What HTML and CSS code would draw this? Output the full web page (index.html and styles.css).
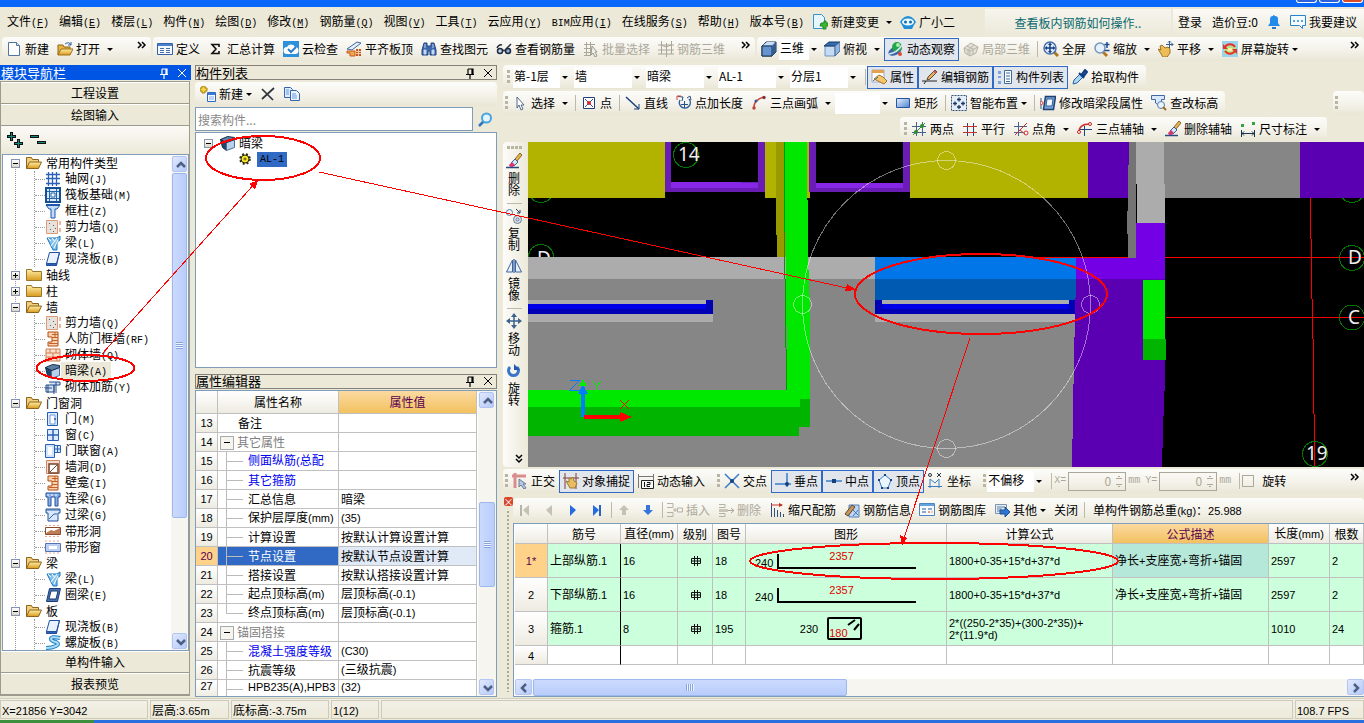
FILE: index.html
```html
<!DOCTYPE html>
<html lang="zh-CN">
<head>
<meta charset="utf-8">
<title>钢筋算量</title>
<link rel="stylesheet" href="styles.css">
</head>
<body>
<svg class="defs" aria-hidden="true">
<defs>
<linearGradient id="gold" x1="0" y1="0" x2="0" y2="1"><stop offset="0" stop-color="#fff0a8"/><stop offset="1" stop-color="#d99a1c"/></linearGradient>
<linearGradient id="sky" x1="0" y1="0" x2="1" y2="1"><stop offset="0" stop-color="#e6f1ff"/><stop offset="1" stop-color="#4d83cf"/></linearGradient>
</defs>
<symbol id="new" viewBox="0 0 16 16"><path d="M2.500 1.500h8l3 3v10h-11z" fill="#fff" stroke="#52749f"/><path d="M10.500 1.500v3h3" fill="#d6e4f5" stroke="#52749f"/></symbol>
<symbol id="open" viewBox="0 0 16 16"><path d="M1 14V4h5l1 2h6v3" fill="#e8b545" stroke="#8d6417"/><path d="M1 14L4 8h12l-3 6z" fill="url(#gold)" stroke="#a06f16"/><path d="M8 3q4-3 6 1M14 1v3h-3" fill="none" stroke="#2d5faa"/></symbol>
<symbol id="folder" viewBox="0 0 16 16"><path d="M.5 13.500v-11h5l1 2h9v9z" fill="url(#gold)" stroke="#98762c"/></symbol>
<symbol id="ofolder" viewBox="0 0 16 16"><path d="M.5 13.500v-11h5l1 2h6v3" fill="#f0cf80" stroke="#8d6417"/><path d="M.5 13.500l3-6.500h12l-3 6.500z" fill="url(#gold)" stroke="#8d6417"/></symbol>
<symbol id="define" viewBox="0 0 16 16"><path d="M.5 2.500h15v11H.5z" fill="#f5f9ff" stroke="#3561a9"/><path d="M1 3h14v2H1z" fill="#4a80d0"/><path d="M3 7.500h4M3 9.500h4M3 11.500h4M9 7.500h4M9 9.500h4M9 11.500h4" stroke="#4a70a8"/></symbol>
<symbol id="sigma" viewBox="0 0 16 16"><path d="M11 6V3.500H4L8 8l-4 4.500h7V10" fill="none" stroke="#111" stroke-width="1.600"/></symbol>
<symbol id="cloud" viewBox="0 0 16 16"><path d="M0 0h16v16H0z" fill="#2c91da"/><path d="M4 13a3.500 3.500 0 0 1 0-7 4.500 4.500 0 0 1 8 0 3.500 3.500 0 0 1 0 7z" fill="#fff"/><path d="M5 8l3 3 5-5" fill="none" stroke="#2c7dca" stroke-width="2"/></symbol>
<symbol id="align" viewBox="0 0 16 16"><path d="M1 8l10-7 4 1-9 7z" fill="#e3eefc" stroke="#44699e"/><path d="M1 10h8v5H4v-3H1z" fill="#f5a848" stroke="#c3591a"/><path d="M10 8h5v7h-5z" fill="#c2561d"/><path d="M10 10.500h5M10 12.500h5M12.500 8v7" stroke="#f7caa3"/></symbol>
<symbol id="binoc" viewBox="0 0 16 16"><path d="M3 2h3v3h4V2h3l2 7v5H9v-4H7v4H1V9z" fill="#3c68ae" stroke="#244781"/><path d="M3 9h2v4H3zM11 9h2v4h-2zM4 3v4M12 3v4" fill="#cfe0f8" stroke="#bed3f3"/></symbol>
<symbol id="glasses" viewBox="0 0 16 16"><path d="M1 7q2-4 5-3M10 8l5-5M6.500 10q1.500-1.500 3 0" fill="none" stroke="#263042" stroke-width="1.500"/><circle cx="4" cy="10" r="2.500" fill="#c6d8ef" stroke="#1f2a3b" stroke-width="1.500"/><circle cx="12" cy="10" r="2.500" fill="#89acdd" stroke="#1f2a3b" stroke-width="1.500"/></symbol>
<symbol id="batch" viewBox="0 0 16 16"><path d="M1 3.500h11M1 7.500h8M1 11.500h7M3.500 1v13M7.500 1v13M1 14.500h7" stroke="#aaa798" fill="none"/><path d="M9 5l5 6h-2l2 4-2 1-2-4-2 2z" fill="#efeee7" stroke="#9e9b8b"/></symbol>
<symbol id="cage" viewBox="0 0 16 16"><path d="M3.500 0v13M8.500 2v14M13.500 0v13M0 4h16M0 9h16M0 13h16M3 4l5 2 5-2" stroke="#aaa798" fill="none"/></symbol>
<symbol id="cube" viewBox="0 0 16 16"><path d="M1 5l4-4h10v10l-4 4H1z" fill="#8bb0de" stroke="#1a3350"/><path d="M1 5h10v10H1z" fill="#6593cf" stroke="#1a3350"/><path d="M11 5l4-4v10l-4 4z" fill="#355c90"/><path d="M2 4l4-3h8l-3 3z" fill="#c9def7"/></symbol>
<symbol id="topv" viewBox="0 0 16 16"><path d="M1 5h10v10H1z" fill="#c5daf3" stroke="#7394be"/><path d="M0 5l5-4h11l-5 4z" fill="#326db0" stroke="#183b66"/><path d="M11 5l5-4v9l-5 5z" fill="#91b5df" stroke="#476b96"/></symbol>
<symbol id="orbit" viewBox="0 0 16 16"><ellipse cx="7" cy="10" rx="7" ry="4" fill="#3767a5" transform="rotate(-25 7 10)"/><circle cx="9" cy="6" r="5" fill="#26a64b"/><circle cx="10" cy="4" r="2" fill="#a5efa8"/><path d="M1 13q8-1 13-9" fill="none" stroke="#d8e6f4" stroke-width="1.500"/><circle cx="12" cy="13" r="2" fill="#dc4b34"/></symbol>
<symbol id="part" viewBox="0 0 16 16"><path d="M1 7l7-5 7 4-2 6-6 3-5-3z" fill="#e3e1d8" stroke="#b7b4a6"/><path d="M1 7l6 3 8-4M7 10v5M4 5l6 3v6M11 4l-6 5v5" fill="none" stroke="#b7b4a6"/></symbol>
<symbol id="full" viewBox="0 0 16 16"><path d="M11 11l4 4" stroke="#ae761e" stroke-width="3"/><circle cx="7" cy="7" r="6" fill="#dceafb" stroke="#4a71aa" stroke-width="1.500"/><path d="M3 7h8M7 3v8" stroke="#153f83" stroke-width="1.500"/><path d="M7 1.500l2 2.500H5zM7 12.500l2-2.500H5zM1.500 7L4 5v4zM12.500 7L10 5v4z" fill="#153f83"/></symbol>
<symbol id="zoom" viewBox="0 0 16 16"><path d="M9 11l4 4" stroke="#b17a22" stroke-width="3"/><circle cx="6" cy="7" r="5" fill="#e7f1fd" stroke="#7596bb" stroke-width="1.500"/><path d="M13 1v6M10.500 3.500h5M10.500 9.500h5" stroke="#184b91" stroke-width="1.500"/></symbol>
<symbol id="hand" viewBox="0 0 16 16"><path d="M0 8l3 1-1-4 2-1 3 3 3-1 2 2v4l-3 4H5z" fill="#edbd58" stroke="#9e7224"/><path d="M11.500 0v7M8 3.500h7M10 1.500L11.500 0 13 1.500M13.500 2L15 3.500 13.500 5" stroke="#315b92" fill="none"/></symbol>
<symbol id="scrrot" viewBox="0 0 16 16"><path d="M0 0h16v16H0z" fill="#9bd3e8"/><path d="M2 5h12v8H2z" fill="#b5e28c"/><path d="M3 6a6 6 0 0 1 10 0M13 10a6 6 0 0 1-10 0" fill="none" stroke="#e82f28" stroke-width="2"/><path d="M1 3v5h5zM15 13V8h-5z" fill="#e82f28"/><path d="M6 7h4v3H6z" fill="#fff2a0"/></symbol>
<symbol id="change" viewBox="0 0 16 16"><path d="M1.500.5h8l3 3v11h-11z" fill="#e7f5ff" stroke="#3893c9"/><path d="M9 9h3V7h2v2h2v3h-2v3h-3v-3H8z" fill="#3db52c" stroke="#1f8a26"/></symbol>
<symbol id="robot" viewBox="0 0 16 16"><path d="M2 5q6-6 12 0l2 3-2 3-2 4H4l-2-4-2-3z" fill="#238ed6"/><ellipse cx="8" cy="8" rx="6" ry="3.500" fill="#e9faff"/><circle cx="5.500" cy="8" r="1.500" fill="#126bb1"/><circle cx="10.500" cy="8" r="1.500" fill="#126bb1"/></symbol>
<symbol id="bell" viewBox="0 0 16 16"><path d="M2 12l2-3V5q0-3 3-3 0-2 2 0 3 0 3 3v4l2 3z" fill="#238bea"/><path d="M6 13h4v2H6z" fill="#2a79c8"/></symbol>
<symbol id="chat" viewBox="0 0 16 16"><path d="M.5 1.500h15v10h-3v3l-3-3h-9z" fill="#f4fbff" stroke="#2a82ca"/><path d="M3 7h2M7 7h2M11 7h2" stroke="#2a82ca" stroke-width="1.500"/></symbol>
<symbol id="attr" viewBox="0 0 16 16"><path d="M1 1h12v12H1z" fill="#fff" stroke="#a2adbb"/><path d="M1 1h12v3H1z" fill="#e5a14f"/><path d="M3 10l5-4 4 2 4 4-3 3z" fill="#f4c66b" stroke="#a8722c"/><path d="M2 12l5-4" stroke="#4b6385"/></symbol>
<symbol id="pencil" viewBox="0 0 16 16"><path d="M0 12h15M4 12L2 15" stroke="#222" fill="none"/><path d="M5 11l1-3 7-7 2 2-7 7z" fill="#e8b163" stroke="#5b4b37"/><path d="M12 2l2 2" stroke="#d15858" stroke-width="2"/></symbol>
<symbol id="list" viewBox="0 0 16 16"><path d="M1 2h3v3H1zM1 7h3v2H1zM1 12h3v3H1z" fill="#78a5e1"/><path d="M7.500 1.500h7v13h-7z" fill="#fff" stroke="#3e699f"/><path d="M9 4h4M9 7h4M9 10h4M9 12.500h4" stroke="#3e699f"/></symbol>
<symbol id="drop" viewBox="0 0 16 16"><path d="M1 15l1-4 6-6 3 3-6 6z" fill="#a9d6f5" stroke="#2d63a5"/><path d="M7 4l5 5M10 5l3-4 2 2-3 4z" stroke="#123e82" stroke-width="2" fill="#25599c"/></symbol>
<symbol id="cursor" viewBox="0 0 16 16"><path d="M5 2v11l2-3 2 5 2-1-2-4h3z" fill="#fff" stroke="#536a8d"/></symbol>
<symbol id="pt" viewBox="0 0 16 16"><path d="M2.500 2.500h11v11h-11z" fill="#fff" stroke="#253d7b"/><path d="M4 4l8 8M12 4l-8 8" stroke="#2d4d9c"/><circle cx="8" cy="8" r="2" fill="#d82828"/></symbol>
<symbol id="line" viewBox="0 0 16 16"><path d="M1 2l13 12" stroke="#1b407b" stroke-width="1.500"/><path d="M14 9v5H9" stroke="#1b407b" fill="none"/></symbol>
<symbol id="ptlen" viewBox="0 0 16 16"><path d="M4 5a5.500 5.500 0 1 0 9-1" fill="none" stroke="#3160a4" stroke-width="1.500"/><path d="M5 9.500h7M8.500 6v7M2 1.500l5 .5-1 4M11 3l3-2 1 4" stroke="#294e83" fill="none"/><path d="M1 5V1h4" stroke="#d34132" fill="none"/></symbol>
<symbol id="arc" viewBox="0 0 16 16"><path d="M3 14Q2 5 13 2" fill="none" stroke="#ca4436" stroke-width="1.500"/><circle cx="3" cy="13" r="1.700" fill="#b64439"/><circle cx="13" cy="2.500" r="1.700" fill="#7c353c"/><circle cx="5" cy="6" r="1.500" fill="#315a9e"/></symbol>
<symbol id="rect" viewBox="0 0 16 16"><path d="M1.500 3.500h13v9h-13z" fill="url(#sky)" stroke="#2656a2"/></symbol>
<symbol id="smart" viewBox="0 0 16 16"><path d="M.5.5h15v15H.5z" fill="#e5edf8" stroke="#375276" stroke-dasharray="2 1"/><path d="M6 4.500h4M8 2.500v4M2 8.500h4M4 6.500v4M10 8.500h4M12 6.500v4M6 12h4M8 10v4" stroke="#183961" stroke-width="1.300"/></symbol>
<symbol id="seg" viewBox="0 0 16 16"><path d="M5.500 1.500h10l-2 13h-10z" fill="#76a0d9" stroke="#1e416f" stroke-width="1.500"/><path d="M7 4h6l-1 7H6z" fill="#f3f8ff" stroke="#32639b"/><path d="M1 3v11" stroke="#315688"/><circle cx="1.500" cy="8" r="1.500" fill="#fff" stroke="#d33"/></symbol>
<symbol id="elev" viewBox="0 0 16 16"><path d="M.5.500h13v4h-3v3l-3 2.500L4.500 8V4.500h-4z" fill="#d8e8ff" stroke="#4168a5"/><circle cx="10" cy="10" r="3.500" fill="#eaf4ff" stroke="#587aae"/><path d="M12 12l3 3" stroke="#9f6b25" stroke-width="2"/></symbol>
<symbol id="twopt" viewBox="0 0 16 16"><path d="M1 5.500h14M1 11.500h14M5.500 1v14M11.500 1v14" stroke="#46618d"/><path d="M2 14L14 2" stroke="#39873a"/><circle cx="11" cy="5" r="2" fill="#288b36"/><circle cx="5" cy="11" r="2" fill="#288b36"/></symbol>
<symbol id="parl" viewBox="0 0 16 16"><path d="M5.500 2v13M11.500 2v13" stroke="#27477e"/><path d="M1 5.500h14M1 11.500h14" stroke="#c6302d"/></symbol>
<symbol id="ptang" viewBox="0 0 16 16"><path d="M1 5.500h13M1 11.500h9M5.500 1v14" stroke="#46618d"/><path d="M2 14L14 2" stroke="#cc2f2c"/><circle cx="13" cy="12" r="2" fill="#fff" stroke="#cc2f2c"/><path d="M7 9l5 4" stroke="#cc2f2c"/></symbol>
<symbol id="arcax" viewBox="0 0 16 16"><path d="M2 11Q2 3 13 3" fill="none" stroke="#cc2f2c" stroke-width="1.500"/><path d="M3 8.500h12M7.500 5v10" stroke="#1c457e"/><circle cx="2" cy="11" r="1.500" fill="#fff" stroke="#c22"/><circle cx="13" cy="3" r="1.500" fill="#fff" stroke="#c22"/></symbol>
<symbol id="brush" viewBox="0 0 16 16"><path d="M0 14.500h13" stroke="#244d83" stroke-width="1.500"/><path d="M9 6l5-6 2 2-5 6z" fill="#e6b34e" stroke="#8c6525"/><path d="M5 10l4-4 3 3-4 4z" fill="#d6e6fa" stroke="#3b6191"/><path d="M3 12l3-3 3 3-2 2H4z" fill="#cf3b72"/></symbol>
<symbol id="dim" viewBox="0 0 16 16"><path d="M1.500 9v7M14.500 9v7M2 12.500h12M4 10.500l-2 2 2 2M12 10.500l2 2-2 2" stroke="#1c3350" fill="none"/><path d="M1 3h3v3H1zM12 1h3v3h-3z" fill="#32a344"/></symbol>
<symbol id="newc" viewBox="0 0 16 16"><path d="M2 0h3v2h2v3H5v2H2V5H0V2h2z" fill="#f5d242" stroke="#a28112"/><path d="M7.500 6.500h8v9h-8z" fill="#f5faff" stroke="#2f6ac0"/><path d="M8 7h7v2H8z" fill="#3b7ad7"/><path d="M9 11h5M9 13h5" stroke="#86abde"/></symbol>
<symbol id="xdel" viewBox="0 0 16 16"><path d="M2 3l11 11M14 2L2 13" stroke="#30343b" stroke-width="1.700"/></symbol>
<symbol id="copy" viewBox="0 0 16 16"><path d="M.5 1.500h6l2 2v8h-8z" fill="#dfebff" stroke="#3466af"/><path d="M6.500 4.500h6l3 3v7h-9z" fill="#eef5ff" stroke="#3466af"/><path d="M8 8h4M8 10h5M8 12h5M2 4h3M2 6h3M2 8h3" stroke="#659ade"/></symbol>
<symbol id="search" viewBox="0 0 16 16"><path d="M7 9l-5 5" stroke="#2b76bd" stroke-width="2.500"/><circle cx="9.500" cy="6" r="4.500" fill="#e3f5ff" stroke="#4aa3dc" stroke-width="2"/></symbol>
<symbol id="gear" viewBox="0 0 16 16"><circle cx="8" cy="8" r="4" fill="#f6e62c" stroke="#282500"/><circle cx="8" cy="8" r="5" fill="none" stroke="#282500" stroke-width="1.500" stroke-dasharray="2 2"/><circle cx="8" cy="8" r="1" fill="#fff06b" stroke="#514800"/></symbol>
<symbol id="copyv" viewBox="0 0 16 16"><circle cx="3.500" cy="4.500" r="3" fill="#eef3fb" stroke="#58779f"/><circle cx="11.500" cy="11.500" r="4" fill="#d8e2ee" stroke="#6c7b8f"/><circle cx="11.500" cy="11.500" r="1.500" fill="none" stroke="#6c7b8f"/><path d="M10 1l4 4V2M14 5h-3" stroke="#263d62" fill="none"/></symbol>
<symbol id="mirror" viewBox="0 0 16 16"><path d="M6.500 2v12h-6zM9.500 2v12h6z" fill="#e9f1fd" stroke="#3b66a5"/><path d="M8 1v14" stroke="#153e7d"/></symbol>
<symbol id="move" viewBox="0 0 16 16"><path d="M8 2v12M2 8h12" fill="none" stroke="#3d628e" stroke-width="1.500"/><path d="M8 0l3 4H5zM8 16l3-4H5zM0 8l4-3v6zM16 8l-4-3v6z" fill="#3d628e"/></symbol>
<symbol id="rot" viewBox="0 0 16 16"><path d="M4 4a5 5 0 1 0 7 0" fill="none" stroke="#3a74cb" stroke-width="3"/><path d="M8 1v6h6z" fill="#2458ad"/></symbol>
<symbol id="ortho" viewBox="0 0 16 16"><path d="M0 3h14M3 0v15" stroke="#d98e8d" stroke-width="3"/><path d="M7 6v8l2-2 3 4 2-1-3-4h3z" fill="#b7c7df" stroke="#697d9b"/></symbol>
<symbol id="osnap" viewBox="0 0 16 16"><path d="M2 0v16M13 0v16M0 5h16" stroke="#813d37"/><path d="M3 8l3 1V5l2 1 2-2 1 4 3 2-2 5H7z" fill="#e8bd62" stroke="#9d7a35"/></symbol>
<symbol id="dyn" viewBox="0 0 16 16"><path d="M0 3.500h16M.5 1v14M15.500 1v6" stroke="#777" fill="none"/><path d="M3.500 7.500h12v8h-12z" fill="#f6f6f6" stroke="#222"/><path d="M6.500 9v5M9 9.500h3v2H9v2h3" stroke="#111" fill="none"/></symbol>
<symbol id="cross" viewBox="0 0 16 16"><path d="M1 1l14 14M15 1L1 15" stroke="#397dca" stroke-width="1.500"/><circle cx="8" cy="8" r="2" fill="#173f7c"/></symbol>
<symbol id="perp" viewBox="0 0 16 16"><path d="M0 11h16M12 0v14" stroke="#397dca" stroke-width="1.500"/><circle cx="12" cy="11" r="2" fill="#173f7c"/></symbol>
<symbol id="mid" viewBox="0 0 16 16"><path d="M0 8h16" stroke="#397dca" stroke-width="1.500"/><path d="M6 6h4v4H6z" fill="#173f7c"/></symbol>
<symbol id="penta" viewBox="0 0 16 16"><path d="M8 2l6 5-3 8H5L2 7z" fill="#eaf5ff" stroke="#397dca"/><path d="M7 1h2v2H7zM1 6h2v2H1zM13 6h2v2h-2zM4 14h2v2H4zM10 14h2v2h-2z" fill="#173f7c"/></symbol>
<symbol id="coord" viewBox="0 0 16 16"><path d="M2 6v9M0 13.500h14M2 6l5 4 4-4v9" stroke="#397dca" fill="none"/><circle cx="2" cy="2" r="1.500" fill="none" stroke="#234"/><path d="M9 0l4 4M13 0L9 4" stroke="#234"/></symbol>
<symbol id="first" viewBox="0 0 16 16"><path d="M4 3v11" stroke="#b8b5a7" stroke-width="2"/><path d="M12 3v11L6 8z" fill="#c5c2b5"/></symbol>
<symbol id="prev" viewBox="0 0 16 16"><path d="M11 3v11L5 8z" fill="#c5c2b5"/></symbol>
<symbol id="next" viewBox="0 0 16 16"><path d="M5 3v11l6-6z" fill="#246be0"/></symbol>
<symbol id="last" viewBox="0 0 16 16"><path d="M11 3v11" stroke="#2a62c2" stroke-width="2"/><path d="M4 3v11l6-6z" fill="#246be0"/></symbol>
<symbol id="up" viewBox="0 0 16 16"><path d="M8 3l5 5h-3v5H6V8H3z" fill="#c5c2b5"/></symbol>
<symbol id="down" viewBox="0 0 16 16"><path d="M8 13l5-5h-3V3H6v5H3z" fill="#3474db"/></symbol>
<symbol id="ins" viewBox="0 0 16 16"><path d="M0 1.500h6v4H0M0 10.500h6v4H0M15.500 6v4h-5V6zM6 8h4M8 6v4" fill="none" stroke="#b5b2a4"/></symbol>
<symbol id="delr" viewBox="0 0 16 16"><path d="M1 2.500h6v3H1M1 11.500h6v3H1" fill="none" stroke="#b5b2a4"/><path d="M1 7h9v3H1z" fill="#c9c6b9"/><path d="M10 8.500h6M13 6l3 2.500-3 2.500" stroke="#aaa798" fill="none"/></symbol>
<symbol id="scale" viewBox="0 0 16 16"><path d="M2.500 1v14M5.500 6v9M8.500 8v7M11.500 10v5M14.500 12v3" stroke="#33507c"/><path d="M2 3h11" stroke="#c33"/><path d="M10 1v4l4-2z" fill="#b32"/></symbol>
<symbol id="info" viewBox="0 0 16 16"><path d="M5 3h10v12H5z" fill="#bdd7f6" stroke="#537fb9"/><path d="M1 12l7-9 3 2-7 9z" fill="#c99659" stroke="#594a36"/><path d="M9 8l5 5M14 8l-5 6" stroke="#4773ae"/></symbol>
<symbol id="lib" viewBox="0 0 16 16"><path d="M.5 1.500h15v12H.5z" fill="#f6faff" stroke="#4b86c0"/><path d="M1 2h14v2H1z" fill="#62a2df"/><path d="M3 7h4M3 10h4M9 7h4" stroke="#275c94"/><path d="M9 10h2" stroke="#d33"/><path d="M12 10h2" stroke="#da2"/></symbol>
<symbol id="other" viewBox="0 0 16 16"><path d="M1.500 2.500h11v9h-11z" fill="#e1edfb" stroke="#7d93ae"/><path d="M3 5h8M3 7h5M3 9h4" stroke="#68809e"/><path d="M6 8h5V5l5 5-5 5v-3H6z" fill="#2e76cf" stroke="#1c4f94"/></symbol>
<symbol id="grid" viewBox="0 0 16 16"><path d="M1 3.500h14M1 7.500h14M1 12.500h14M3.500 1v14M7.500 1v14M11.500 1v14" stroke="#2c60b9" stroke-width="1.300"/></symbol>
<symbol id="raft" viewBox="0 0 16 16"><path d="M1 1h14v14H1z" fill="#dbe9ff" stroke="#164f94" stroke-width="2"/><path d="M2 4.500h12M2 11.500h12M4.500 2v12M11.500 2v12" stroke="#2167aa"/><path d="M6 6h4v4H6z" fill="#fff" stroke="#2167aa"/></symbol>
<symbol id="col" viewBox="0 0 16 16"><path d="M1 2h14l-3 4h-2v9H6V6H4z" fill="#c2dbf9" stroke="#1e56ae"/><path d="M1 2h14" stroke="#1e56ae" stroke-width="2"/></symbol>
<symbol id="wall" viewBox="0 0 16 16"><path d="M1.500 1.500h11v13h-11z" fill="#e5e1dd" stroke="#dc9a79"/><path d="M4 4h1v1H4zM8 6h1v1H8zM5 10h1v1H5zM10 9h1v1h-1zM8 12h1v1H8z" fill="#635b57"/><path d="M15 2v4M15 9v4" stroke="#dd703c"/></symbol>
<symbol id="beam" viewBox="0 0 16 16"><path d="M2 3h10l3-2v4l-3 2v8H8l-3-6z" fill="#83c2ee" stroke="#1676bd"/><path d="M3 3l3 3M7 3l3 4M12 3l-6 8M13 5l-4 8" stroke="#fff"/></symbol>
<symbol id="slab" viewBox="0 0 16 16"><path d="M4.500 1.500h10l-3 11h-10z" fill="#e9f2ff" stroke="#244fa0"/><path d="M1.500 12.500h10v2h-10zM11.500 14.500l3-13" fill="#2c61b7" stroke="#244fa0"/></symbol>
<symbol id="niche" viewBox="0 0 16 16"><path d="M3 1h10v14H3v-4h4V6H3z" fill="#ffd2ad" stroke="#b04d12"/><path d="M7 3.500h6M7 6.500h6M7 9.500h6M4 12.500h9M10 1v5" stroke="#bd642c"/></symbol>
<symbol id="brick" viewBox="0 0 16 16"><path d="M1 2h14v12H1z" fill="#fae0cd" stroke="#ce7f55"/><path d="M1 6h14M1 10h14M5 2v4M11 2v4M8 6v4M4 10v4M12 10v4" stroke="#ce7f55"/></symbol>
<symbol id="hbeam" viewBox="0 0 16 16"><path d="M.5 4.500l6 3v8l-4-3z" fill="#24456c" stroke="#152d49"/><path d="M6.500 7.500l8-3v8l-8 3z" fill="#b9d0ec" stroke="#4c6d95"/><path d="M.5 4.500l7-3 7 1v2l-8 3z" fill="#5d7da4" stroke="#152d49"/></symbol>
<symbol id="brebar" viewBox="0 0 16 16"><path d="M1 6h8v7H1zM4 3h11v3H9v9M11 3v11" fill="#d7e3f5" stroke="#244c88"/><path d="M0 9h7M3 6v8" stroke="#244c88"/></symbol>
<symbol id="door" viewBox="0 0 16 16"><path d="M2.500 1.500h10v13h-10z" fill="#dceaff" stroke="#235bb1"/><path d="M5 4h5v9H5z" fill="#fff" stroke="#6e9ddc"/><path d="M10 7v2" stroke="#123"/></symbol>
<symbol id="win" viewBox="0 0 16 16"><path d="M2.500 2.500h11v11h-11z" fill="#dcebff" stroke="#2b62b5"/><path d="M8 3v11M3 8h10" stroke="#2b62b5" stroke-width="1.500"/></symbol>
<symbol id="dwin" viewBox="0 0 16 16"><path d="M.5 1.500h9v13h-9zM9.500 2.500h6v7h-6z" fill="#d3e4ff" stroke="#2b62b5"/><path d="M3 4h4v8H3z" fill="#fff"/><path d="M12.500 3v6M10 6h5" stroke="#2b62b5"/></symbol>
<symbol id="whole" viewBox="0 0 16 16"><path d="M1.500 1.500h13v13h-13z" fill="#f8d9ca" stroke="#d08665"/><path d="M4 5h9v9H4z" fill="#fff" stroke="#74462d" stroke-width="1.500"/><path d="M5 13l7-7" stroke="#74462d"/></symbol>
<symbol id="lbeam" viewBox="0 0 16 16"><path d="M1 2h14v4h-2v9h-3V6H6v9H3V6H1z" fill="#87aee6" stroke="#23509b"/><path d="M2 4h12" stroke="#fff" stroke-dasharray="2 2"/></symbol>
<symbol id="gbeam" viewBox="0 0 16 16"><path d="M1 2h14v4h-2v8H3V6H1z" fill="#d7e7ff" stroke="#23509b"/><path d="M1 3h14M4 12l5-5h3" stroke="#34629d" fill="none"/></symbol>
<symbol id="bhole" viewBox="0 0 16 16"><path d="M0 2.500h16M0 13.500h16" stroke="#eaa996" stroke-dasharray="2 2"/><path d="M.5 4.500h15v7H.5z" fill="#fff" stroke="#8c4b29"/><path d="M1 10l5-3 3 1 6-3v6H1z" fill="#bd7e57"/></symbol>
<symbol id="bwin" viewBox="0 0 16 16"><path d="M0 2h16M0 14h16" stroke="#eaa996" stroke-dasharray="2 2"/><path d="M.5 4.500h15v8H.5z" fill="#bbd0f4" stroke="#5572b2"/><path d="M4 7h8v3H4z" fill="#fff"/></symbol>
<symbol id="ring" viewBox="0 0 16 16"><path d="M4.500 1.500h11l-3 13H1.500z" fill="#4b73af" stroke="#183c75"/><path d="M6 4h7l-2 8H4z" fill="#fff" stroke="#183c75"/></symbol>
<symbol id="spiral" viewBox="0 0 16 16"><path d="M15 3Q6 1 6 4q0 2 5 3 4 2 0 4-4 2-10 2" fill="none" stroke="#1c7dc1" stroke-width="4"/><path d="M15 3Q6 1 6 4q0 2 5 3 4 2 0 4-4 2-10 2" fill="none" stroke="#a9def9" stroke-width="2"/></symbol>
<symbol id="pin" viewBox="0 0 12 12"><path d="M4 2h5v5M4 2v5M8 2v5M2 7.500h8M6 8v4" fill="none" stroke="currentColor" stroke-width="1.200"/></symbol>
<symbol id="x" viewBox="0 0 12 12"><path d="M2 2l8 8M10 2l-8 8" stroke="currentColor"/></symbol>
<symbol id="chev" viewBox="0 0 16 16"><path d="M4 10l4-4 4 4" fill="none" stroke="#4d6185" stroke-width="2.500"/></symbol>
<symbol id="more" viewBox="0 0 10 8"><path d="M1 1l3 3-3 3M5 1l3 3-3 3" fill="none" stroke="#000" stroke-width="1.500"/></symbol>
<symbol id="rebar3" viewBox="0 0 12 12"><path d="M4.500 1v10M7.500 1v10M1.500 3.500h9v5h-9zM1 6h10" stroke="#111" fill="none"/></symbol>
<symbol id="bent" viewBox="0 0 140 16"><path d="M1 1v14h138" fill="none" stroke="#000" stroke-width="2"/></symbol>
</svg>

<header class="title"><i></i><i></i><i class="close"></i></header>
<nav class="menu">
<a href="#">文件<span class="m">(<u>F</u>)</span></a><a href="#">编辑<span class="m">(<u>E</u>)</span></a><a href="#">楼层<span class="m">(<u>L</u>)</span></a><a href="#">构件<span class="m">(<u>N</u>)</span></a><a href="#">绘图<span class="m">(<u>D</u>)</span></a><a href="#">修改<span class="m">(<u>M</u>)</span></a><a href="#">钢筋量<span class="m">(<u>Q</u>)</span></a><a href="#">视图<span class="m">(<u>V</u>)</span></a><a href="#">工具<span class="m">(<u>T</u>)</span></a><a href="#">云应用<span class="m">(<u>Y</u>)</span></a><a href="#"><span class="m">BIM</span>应用<span class="m">(<u>I</u>)</span></a><a href="#">在线服务<span class="m">(<u>S</u>)</span></a><a href="#">帮助<span class="m">(<u>H</u>)</span></a><a href="#">版本号<span class="m">(<u>B</u>)</span></a>
<button class="b change"><svg class="i"><use href="#change"/></svg>新建变更<i class="c"></i></button>
<button class="b"><svg class="i"><use href="#robot"/></svg>广小二</button>
<a class="tip" href="#">查看板内钢筋如何操作..</a>
<div class="account"><a href="#">登录</a><span>造价豆:0</span><button class="b" aria-label="通知"><svg class="i"><use href="#bell"/></svg></button><button class="b"><svg class="i"><use href="#chat"/></svg>我要建议</button></div>
</nav>
<div class="bars">
<div class="tb file"><button class="b"><svg class="i"><use href="#new"/></svg>新建</button><button class="b"><svg class="i"><use href="#open"/></svg>打开<i class="c"></i></button><svg class="more"><use href="#more"/></svg></div>
<div class="tb calc"><button class="b"><svg class="i"><use href="#define"/></svg>定义</button><button class="b"><svg class="i"><use href="#sigma"/></svg>汇总计算</button><button class="b"><svg class="i"><use href="#cloud"/></svg>云检查</button><button class="b"><svg class="i"><use href="#align"/></svg>平齐板顶</button><button class="b"><svg class="i"><use href="#binoc"/></svg>查找图元</button><button class="b"><svg class="i"><use href="#glasses"/></svg>查看钢筋量</button><button class="b" disabled><svg class="i"><use href="#batch"/></svg>批量选择</button><button class="b" disabled><svg class="i"><use href="#cage"/></svg>钢筋三维</button><svg class="more"><use href="#more"/></svg></div>
<div class="tb view"><svg class="i lead"><use href="#cube"/></svg><label class="sel w40"><select aria-label="视图模式"><option>三维</option></select></label><button class="b"><svg class="i"><use href="#topv"/></svg>俯视<i class="c"></i></button><button class="b on"><svg class="i"><use href="#orbit"/></svg>动态观察</button><button class="b" disabled><svg class="i"><use href="#part"/></svg>局部三维</button><i class="s"></i><button class="b"><svg class="i"><use href="#full"/></svg>全屏</button><button class="b"><svg class="i"><use href="#zoom"/></svg>缩放<i class="c"></i></button><button class="b"><svg class="i"><use href="#hand"/></svg>平移<i class="c"></i></button><button class="b"><svg class="i"><use href="#scrrot"/></svg>屏幕旋转<i class="c near"></i></button><svg class="more"><use href="#more"/></svg></div>
</div>

<main>
<aside class="nav">
<h2 class="cap active">模块导航栏<svg><use href="#pin"/></svg><svg><use href="#x"/></svg></h2>
<div class="dock">
<button class="flat">工程设置</button><button class="flat">绘图输入</button>
<div class="mini"><svg width="16" height="16" viewBox="0 0 16 16"><path d="M4.500 0v9M0 4.500h9M11.500 7v9M7 11.500h9" stroke="#111" stroke-width="3"/><path d="M4.500 1v7M1 4.500h7M11.500 8v7M8 11.500h7" stroke="#16897d"/></svg><svg width="16" height="16" viewBox="0 0 16 16"><path d="M0 4.500h9M7 10.500h9" stroke="#111" stroke-width="3"/><path d="M1 4.500h7M8 10.500h7" stroke="#16897d"/></svg></div>
<div class="treebox">
<ul class="tree">
<li><div><i class="pm"></i><svg class="i"><use href="#ofolder"/></svg>常用构件类型</div><ul>
<li><svg class="i"><use href="#grid"/></svg><span>轴网<span class="m">(J)</span></span></li><li><svg class="i"><use href="#raft"/></svg><span>筏板基础<span class="m">(M)</span></span></li><li><svg class="i"><use href="#col"/></svg><span>框柱<span class="m">(Z)</span></span></li><li><svg class="i"><use href="#wall"/></svg><span>剪力墙<span class="m">(Q)</span></span></li><li><svg class="i"><use href="#beam"/></svg><span>梁<span class="m">(L)</span></span></li><li><svg class="i"><use href="#slab"/></svg><span>现浇板<span class="m">(B)</span></span></li></ul></li>
<li><div><i class="pm plus"></i><svg class="i"><use href="#folder"/></svg>轴线</div></li>
<li><div><i class="pm plus"></i><svg class="i"><use href="#folder"/></svg>柱</div></li>
<li><div><i class="pm"></i><svg class="i"><use href="#ofolder"/></svg>墙</div><ul>
<li><svg class="i"><use href="#wall"/></svg><span>剪力墙<span class="m">(Q)</span></span></li><li><svg class="i"><use href="#niche"/></svg><span>人防门框墙<span class="m">(RF)</span></span></li><li><svg class="i"><use href="#brick"/></svg><span>砌体墙<span class="m">(Q)</span></span></li><li><svg class="i"><use href="#hbeam"/></svg><span class="cur">暗梁<span class="m">(A)</span></span></li><li><svg class="i"><use href="#brebar"/></svg><span>砌体加筋<span class="m">(Y)</span></span></li></ul></li>
<li><div><i class="pm"></i><svg class="i"><use href="#ofolder"/></svg>门窗洞</div><ul>
<li><svg class="i"><use href="#door"/></svg><span>门<span class="m">(M)</span></span></li><li><svg class="i"><use href="#win"/></svg><span>窗<span class="m">(C)</span></span></li><li><svg class="i"><use href="#dwin"/></svg><span>门联窗<span class="m">(A)</span></span></li><li><svg class="i"><use href="#whole"/></svg><span>墙洞<span class="m">(D)</span></span></li><li><svg class="i"><use href="#niche"/></svg><span>壁龛<span class="m">(I)</span></span></li><li><svg class="i"><use href="#lbeam"/></svg><span>连梁<span class="m">(G)</span></span></li><li><svg class="i"><use href="#gbeam"/></svg><span>过梁<span class="m">(G)</span></span></li><li><svg class="i"><use href="#bhole"/></svg><span>带形洞</span></li><li><svg class="i"><use href="#bwin"/></svg><span>带形窗</span></li></ul></li>
<li><div><i class="pm"></i><svg class="i"><use href="#ofolder"/></svg>梁</div><ul>
<li><svg class="i"><use href="#beam"/></svg><span>梁<span class="m">(L)</span></span></li><li><svg class="i"><use href="#ring"/></svg><span>圈梁<span class="m">(E)</span></span></li></ul></li>
<li><div><i class="pm"></i><svg class="i"><use href="#ofolder"/></svg>板</div><ul>
<li><svg class="i"><use href="#slab"/></svg><span>现浇板<span class="m">(B)</span></span></li><li><svg class="i"><use href="#spiral"/></svg><span>螺旋板<span class="m">(B)</span></span></li></ul></li>
</ul>
<div class="sb navsb"><button aria-label="向上"><svg class="i"><use href="#chev"/></svg></button><i class="thumb"></i><i class="rest"></i><button class="dn" aria-label="向下"><svg class="i"><use href="#chev"/></svg></button></div>
</div>
<button class="flat">单构件输入</button><button class="flat">报表预览</button>
</div>
</aside>

<section class="mid">
<h2 class="cap">构件列表<svg><use href="#pin"/></svg><svg><use href="#x"/></svg></h2>
<div class="tb list"><button class="b"><svg class="i"><use href="#newc"/></svg>新建<i class="c near"></i></button><button class="b" aria-label="删除"><svg class="i"><use href="#xdel"/></svg></button><button class="b" aria-label="复制"><svg class="i"><use href="#copy"/></svg></button></div>
<div class="find"><input type="text" placeholder="搜索构件..." aria-label="搜索构件"><button aria-label="搜索"><svg class="i"><use href="#search"/></svg></button></div>
<div class="comp"><div><i class="pm"></i><svg class="i"><use href="#hbeam"/></svg>暗梁</div><div class="leaf"><svg class="i"><use href="#gear"/></svg><b class="m">AL-1</b></div></div>
<h2 class="cap prop">属性编辑器<svg><use href="#pin"/></svg><svg><use href="#x"/></svg></h2>
<div class="props">
<table>
<colgroup><col class="n"><col class="k"><col></colgroup>
<thead><tr><th></th><th>属性名称</th><th class="or">属性值</th></tr></thead>
<tbody>
<tr><th>13</th><td class="top">备注</td><td></td></tr>
<tr><th>14</th><td class="grp">其它属性</td><td></td></tr>
<tr><th>15</th><td class="sub bl">侧面纵筋<span class="m">(</span>总配</td><td></td></tr>
<tr><th>16</th><td class="sub bl">其它箍筋</td><td></td></tr>
<tr><th>17</th><td class="sub">汇总信息</td><td>暗梁</td></tr>
<tr><th>18</th><td class="sub">保护层厚度<span class="m">(mm)</span></td><td><span class="m">(35)</span></td></tr>
<tr><th>19</th><td class="sub">计算设置</td><td>按默认计算设置计算</td></tr>
<tr class="now"><th>20</th><td class="sub">节点设置</td><td>按默认节点设置计算</td></tr>
<tr><th>21</th><td class="sub">搭接设置</td><td>按默认搭接设置计算</td></tr>
<tr><th>22</th><td class="sub">起点顶标高<span class="m">(m)</span></td><td>层顶标高<span class="m">(-0.1)</span></td></tr>
<tr><th>23</th><td class="sub end">终点顶标高<span class="m">(m)</span></td><td>层顶标高<span class="m">(-0.1)</span></td></tr>
<tr><th>24</th><td class="grp">锚固搭接</td><td></td></tr>
<tr><th>25</th><td class="sub bl">混凝土强度等级</td><td><span class="m">(C30)</span></td></tr>
<tr><th>26</th><td class="sub">抗震等级</td><td><span class="m">(</span>三级抗震<span class="m">)</span></td></tr>
<tr class="lastrow"><th>27</th><td class="sub"><span class="m">HPB235(A),HPB3</span></td><td><span class="m">(32)</span></td></tr>
</tbody></table>
<div class="sb propsb"><button aria-label="向上"><svg class="i"><use href="#chev"/></svg></button><i class="rest"></i><i class="thumb"></i><i class="rest"></i><button class="dn" aria-label="向下"><svg class="i"><use href="#chev"/></svg></button></div>
</div>
</section>

<section class="work">
<div class="tb combos"><i class="g"></i><label class="sel w58"><select aria-label="楼层"><option>第-1层</option></select></label><label class="sel w70"><select aria-label="构件大类"><option>墙</option></select></label><label class="sel w70"><select aria-label="构件类型"><option>暗梁</option></select></label><label class="sel w70"><select aria-label="构件"><option>AL-1</option></select></label><label class="sel w70"><select aria-label="分层"><option>分层1</option></select></label><i class="s"></i><button class="b on"><svg class="i"><use href="#attr"/></svg>属性</button><button class="b on"><svg class="i"><use href="#pencil"/></svg>编辑钢筋</button><button class="b on"><svg class="i"><use href="#list"/></svg>构件列表</button><button class="b"><svg class="i"><use href="#drop"/></svg>拾取构件</button></div>
<div class="two"><div class="tb"><i class="g"></i><button class="b"><svg class="i"><use href="#cursor"/></svg>选择<i class="c"></i></button><i class="s"></i><button class="b"><svg class="i"><use href="#pt"/></svg>点</button><i class="s"></i><button class="b"><svg class="i"><use href="#line"/></svg>直线</button><button class="b"><svg class="i"><use href="#ptlen"/></svg>点加长度</button><button class="b"><svg class="i"><use href="#arc"/></svg>三点画弧<i class="c"></i></button><label class="sel w56"><select aria-label="绘制参数"><option></option></select></label><button class="b"><svg class="i"><use href="#rect"/></svg>矩形</button><i class="s"></i><button class="b"><svg class="i"><use href="#smart"/></svg>智能布置<i class="c near"></i></button><i class="s"></i><button class="b"><svg class="i"><use href="#seg"/></svg>修改暗梁段属性</button><button class="b"><svg class="i"><use href="#elev"/></svg>查改标高</button></div><div class="tb stub"><i class="g"></i></div></div>
<div class="tb axes"><i class="g"></i><button class="b"><svg class="i"><use href="#twopt"/></svg>两点</button><button class="b"><svg class="i"><use href="#parl"/></svg>平行</button><button class="b"><svg class="i"><use href="#ptang"/></svg>点角<i class="c"></i></button><button class="b"><svg class="i"><use href="#arcax"/></svg>三点辅轴<i class="c"></i></button><button class="b"><svg class="i"><use href="#brush"/></svg>删除辅轴</button><button class="b"><svg class="i"><use href="#dim"/></svg>尺寸标注<i class="c"></i></button></div>
<div class="stage">
<div class="vt"><i class="vg"></i><button><svg class="i"><use href="#brush"/></svg><span>删除</span></button><i class="vs"></i><button><svg class="i"><use href="#copyv"/></svg><span>复制</span></button><button><svg class="i"><use href="#mirror"/></svg><span>镜像</span></button><i class="vs"></i><button><svg class="i"><use href="#move"/></svg><span>移动</span></button><button><svg class="i"><use href="#rot"/></svg><span>旋转</span></button><svg class="more"><use href="#more"/></svg></div>
<svg class="model" viewBox="528 142 836 325" preserveAspectRatio="none">
<path d="M528 142h836v325H528z" fill="#000"/>
<g fill="none" stroke="#007800"><circle cx="541" cy="190" r="12.500"/><circle cx="541" cy="257" r="12.500"/><circle cx="686" cy="155" r="12.500"/><circle cx="1352" cy="190" r="12.500"/></g>
<path d="M528 142h137v56H528zM765 142h20v56h-20zM806 142h4v56h-4zM910 142h178v56H910z" fill="#b2b200"/>
<path d="M776 142h9l1 115h-9V235h-1z" fill="#990"/>
<path d="M665 142h6v40h87v-40h7v50H665zM809 142h7v41h87v-41h7v50H809z" fill="#691db4"/>
<path d="M671 182h70v1h17v5h-87zM816 183h87v5h-87z" fill="#8726e6"/>
<g class="lbl"><text x="678" y="161">14</text><text x="537" y="265">D</text></g>
<path d="M528 257h348v22H528z" fill="#acacac"/><path d="M528 279h600v188H528z" fill="#868686"/>
<path d="M528 300h185v22H528zM875 300h200v22H875z" fill="#acacac"/>
<path d="M528 304h178v-4h7v14H528zM875 300h7v4h187v-4h6v14H875z" fill="#0000b4"/>
<path d="M528 304h178v5H528zM882 304h187v5H882z" fill="#0000e8"/>
<path d="M875 257h201v22H875z" fill="#0076e8"/><path d="M875 279h201v21H875z" fill="#005ab2"/>
<path d="M1088 142h41v56h-41zM1300 142h64v56h-64zM1076 279h89v100l-2 50-1 38h-90l2-110z" fill="#5a00b2"/>
<path d="M1164 142h136v56h-136z" fill="#868686"/><path d="M1129 142h7v116h-8v-24h-1z" fill="#747474"/><path d="M1136 142h28l1 82h-28z" fill="#acacac"/>
<path d="M1076 258h60v-35h29v56h-89z" fill="#7400e6"/>
<path d="M1143 280h22v59h-22z" fill="#00e800"/><path d="M1143 339h23v21h-23z" fill="#00b400"/>
<path d="M528 390h259l-1-130-2-118h23l1 115 2 50v94l-10 6H528z" fill="#00e800"/><path d="M528 407h272v-8h10v28h-11v9H528z" fill="#00b400"/>
<path d="M784 142v66l2 140 1 42" fill="none" stroke="#009900"/>
<path d="M1030 257.500h98M1165 257.500h199M1166 317.500h198M1310.500 198l1 80 2 80 1 109" fill="none" stroke="#f00"/>
<g fill="none" stroke="#007800"><circle cx="1352" cy="258" r="12.500"/><circle cx="1352" cy="317.500" r="12.500"/><circle cx="1315" cy="454" r="12.500"/></g>
<g class="lbl"><text x="1348" y="264">D</text><text x="1348" y="324">C</text><text x="1306" y="460">19</text></g>
<g fill="none" stroke="#fff" stroke-opacity=".45"><circle cx="946.500" cy="304.500" r="144"/><circle cx="946.500" cy="160.500" r="9"/><circle cx="946.500" cy="448.500" r="9"/><circle cx="802.500" cy="304.500" r="9"/><circle cx="1090.500" cy="304.500" r="9"/></g>
<path d="M583 417v-30" stroke="#007cff" stroke-width="4"/><path d="M578 394l5-9 5 9z" fill="#007cff"/><path d="M579 386l4-7 4 7z" fill="#0e0"/><path d="M584 417h38" stroke="#f00" stroke-width="4"/><path d="M620 412l12 5-12 5z" fill="#f00"/>
<path d="M570 380h10l-10 10h10" fill="none" stroke="#007cff"/><path d="M592 381l5 5 4-5M597 386v4" fill="none" stroke="#0e0"/><path d="M620 400l9 9M629 400l-9 9" stroke="#f00"/>
</svg>
</div>
<div class="tb snap"><i class="g"></i><button class="b"><svg class="i"><use href="#ortho"/></svg>正交</button><button class="b on"><svg class="i"><use href="#osnap"/></svg>对象捕捉</button><button class="b"><svg class="i"><use href="#dyn"/></svg>动态输入</button><i class="g far"></i><button class="b"><svg class="i"><use href="#cross"/></svg>交点</button><button class="b on"><svg class="i"><use href="#perp"/></svg>垂点</button><button class="b on"><svg class="i"><use href="#mid"/></svg>中点</button><button class="b on"><svg class="i"><use href="#penta"/></svg>顶点</button><button class="b"><svg class="i"><use href="#coord"/></svg>坐标</button><i class="g far"></i><label class="sel w58"><select aria-label="偏移方式"><option>不偏移</option></select></label><i class="s"></i><label class="num"><span class="m">X=</span><span class="box"><input type="text" value="0" disabled><i></i></span><span class="m">mm</span></label><label class="num"><span class="m">Y=</span><span class="box"><input type="text" value="0" disabled><i></i></span><span class="m">mm</span></label><i class="s"></i><label class="chk"><input type="checkbox">旋转</label><svg class="more"><use href="#more"/></svg></div>
<div class="rebar">
<div class="handle"><button aria-label="关闭">×</button></div>
<div class="pane">
<div class="tb rb"><button class="b" aria-label="首行" disabled><svg class="i"><use href="#first"/></svg></button><button class="b" aria-label="上一行" disabled><svg class="i"><use href="#prev"/></svg></button><button class="b" aria-label="下一行"><svg class="i"><use href="#next"/></svg></button><button class="b" aria-label="末行"><svg class="i"><use href="#last"/></svg></button><i class="s"></i><button class="b" aria-label="上移" disabled><svg class="i"><use href="#up"/></svg></button><button class="b" aria-label="下移"><svg class="i"><use href="#down"/></svg></button><i class="s"></i><button class="b" disabled><svg class="i"><use href="#ins"/></svg>插入</button><button class="b" disabled><svg class="i"><use href="#delr"/></svg>删除</button><button class="b"><svg class="i"><use href="#scale"/></svg>缩尺配筋</button><button class="b"><svg class="i"><use href="#info"/></svg>钢筋信息</button><button class="b"><svg class="i"><use href="#lib"/></svg>钢筋图库</button><button class="b"><svg class="i"><use href="#other"/></svg>其他<i class="c near"></i></button><button class="b">关闭</button><i class="s"></i><span class="total">单构件钢筋总重<span class="m">(kg)</span>：<span class="m">25.988</span></span></div>
<div class="grid">
<table>
<colgroup><col class="c33"><col class="c73"><col class="c57"><col class="c35"><col class="c33"><col class="c201"><col class="c166"><col class="c156"><col class="c61"><col></colgroup>
<thead><tr><th></th><th>筋号</th><th>直径<span class="m">(mm)</span></th><th>级别</th><th>图号</th><th>图形</th><th>计算公式</th><th class="or">公式描述</th><th>长度<span class="m">(mm)</span></th><th>根数</th></tr></thead>
<tbody>
<tr class="cur"><th><span class="m">1*</span></th><td>上部纵筋<span class="m">.1</span></td><td><span class="m">16</span></td><td><svg class="q"><use href="#rebar3"/></svg></td><td><span class="m">18</span></td><td><div class="shape"><span class="m">240</span><div><span class="m">2357</span><svg viewBox="0 0 140 16"><use href="#bent"/></svg></div></div></td><td><span class="m">1800+0-35+15*d+37*d</span></td><td class="pick">净长<span class="m">+</span>支座宽<span class="m">+</span>弯折<span class="m">+</span>锚固</td><td><span class="m">2597</span></td><td><span class="m">2</span></td></tr>
<tr><th><span class="m">2</span></th><td>下部纵筋<span class="m">.1</span></td><td><span class="m">16</span></td><td><svg class="q"><use href="#rebar3"/></svg></td><td><span class="m">18</span></td><td><div class="shape"><span class="m">240</span><div><span class="m">2357</span><svg viewBox="0 0 140 16"><use href="#bent"/></svg></div></div></td><td><span class="m">1800+0-35+15*d+37*d</span></td><td>净长<span class="m">+</span>支座宽<span class="m">+</span>弯折<span class="m">+</span>锚固</td><td><span class="m">2597</span></td><td><span class="m">2</span></td></tr>
<tr><th><span class="m">3</span></th><td>箍筋<span class="m">.1</span></td><td><span class="m">8</span></td><td><svg class="q"><use href="#rebar3"/></svg></td><td><span class="m">195</span></td><td><div class="stirrup"><span class="m">230</span><div><span class="m">180</span><svg viewBox="0 0 31 20"><path d="M19 6l7-5M25 11l5-6" stroke="#000" stroke-width="2"/></svg></div></div></td><td><p class="m">2*((250-2*35)+(300-2*35))+<br>2*(11.9*d)</p></td><td></td><td><span class="m">1010</span></td><td><span class="m">24</span></td></tr>
<tr class="blank"><th><span class="m">4</span></th><td></td><td></td><td></td><td></td><td></td><td></td><td></td><td></td><td></td></tr>
</tbody></table>
<div class="hsb"><button aria-label="向左"><svg class="i"><use href="#chev"/></svg></button><i class="thumb"></i><button class="rt" aria-label="向右"><svg class="i"><use href="#chev"/></svg></button></div>
</div>
</div>
</div>
</section>
</main>
<footer class="status"><span class="w148"><span class="m">X=21856 Y=3042</span></span><span class="w80">层高<span class="m">:3.65m</span></span><span class="w98">底标高<span class="m">:-3.75m</span></span><span class="w48"><span class="m">1(12)</span></span><span class="grow"></span><span class="w70"><span class="m">108.7 FPS</span></span></footer>
<div class="taskbar"><i></i></div>
<svg class="marks" viewBox="0 0 1364 723" preserveAspectRatio="none" aria-hidden="true">
<g fill="none" stroke="#f00" stroke-width="2"><ellipse cx="263" cy="158" rx="57" ry="22"/><ellipse cx="85.500" cy="368" rx="49" ry="13"/><ellipse cx="981" cy="294" rx="126" ry="40"/><ellipse cx="934" cy="561" rx="184" ry="18"/></g>
<path d="M102 354L257 181M319 172l537 118M970 338l-68 206" stroke="#f00" fill="none"/>
<path d="M258 180l-9 4 6 6zM857 290l-10-6-2 7zM902 546l-2-11 7 3z" fill="#f00"/>
</svg>
</body>
</html>
```
FILE: styles.css
```css
* { box-sizing: border-box; }
body { margin: 0; height: 100vh; display: flex; flex-direction: column; position: relative; overflow: hidden; background: #ece9d8; color: #000; font: 12px/14px "Noto Sans CJK SC", sans-serif; white-space: nowrap; }
button, input, select { font: inherit; color: inherit; margin: 0; }
button { border: 0; background: none; padding: 0; }
a { color: inherit; text-decoration: none; }
i { font-style: normal; }
ul { list-style: none; margin: 0; padding: 0; }
.defs { position: absolute; width: 0; height: 0; }
.i { width: 16px; height: 16px; flex: none; display: block; }
.m { font-family: "Liberation Mono", monospace; font-size: 10px; }
.grid .m, .props .m, .status .m, .total .m { font-family: "Liberation Sans", sans-serif; font-size: 11px; }
.title { height: 7px; flex: none; display: flex; justify-content: flex-end; gap: 2px; background: #0868fb; padding-right: 1px; }
.title i { width: 21px; height: 3px; background: #2c62dd; border: 1px solid #fff; border-top: 0; border-radius: 0 0 3px 3px; }
.title .close { background: #da4b25; }
.menu { height: 30px; flex: none; display: flex; align-items: center; padding-left: 7px; }
.menu > a { margin-right: 10px; }
.menu > .change { margin-left: -6px; }
.menu .tip { flex: 1; margin: 0 2px 0 26px; height: 27px; line-height: 27px; text-align: center; color: #0b6a70; background: linear-gradient(#f6f5ee, #ece9d8); }
.account { width: 191px; height: 27px; display: flex; align-items: center; padding-left: 5px; background: linear-gradient(#fbfaf7, #ece9d8); }
.account > a { margin-right: 10px; }
.account > span { margin-right: 4px; }
.bars { display: flex; gap: 2px; height: 28px; flex: none; align-items: flex-start; padding-left: 2px; }
.tb { display: flex; align-items: center; height: 24px; flex: none; border-radius: 4px; background: linear-gradient(#fcfcfa, #f3f1e8 60%, #e9e6d5); }
.b { display: inline-flex; align-items: center; gap: 3px; height: 23px; padding: 0 3px; border: 1px solid transparent; flex: none; }
.b.on { border-color: #316ac5; background: #e1e5ec; }
.b:disabled { color: #aca899; }
.c { border: 3px solid transparent; border-top-color: #000; border-bottom: 0; width: 6px; margin-left: 4px; }
.c.near { margin-left: 0; }
.s { width: 1px; height: 16px; background: #bdb9a7; margin: 0 1px 0 3px; flex: none; }
.g { width: 3px; height: 15px; flex: none; background: repeating-linear-gradient(#b9b5a2 0 3px, transparent 3px 5px); }
.more { width: 10px; height: 8px; flex: none; margin: 0 4px 8px auto; }
.file { width: 149px; }
.calc { width: 602px; }
.view { flex: 1; }
.lead { margin-left: 4px; margin-right: 2px; }
.sel { position: relative; height: 21px; background: linear-gradient(#fff, #fff) 0 0 / calc(100% - 11px) 100% no-repeat; flex: none; margin-right: 3px; }
.sel select { appearance: none; border: 0; background: none; width: 100%; height: 18px; padding: 0 12px 0 1px; border-radius: 0; }
.sel::after { content: ""; position: absolute; right: 3px; top: 9px; border: 3px solid transparent; border-top-color: #000; border-bottom: 0; }
.w40 { width: 41px; margin-right: 0; }
.w56 { width: 56px; margin-right: 0; }
.w58 { width: 58px; }
.w70 { width: 69px; }
main { flex: 1; min-height: 0; display: flex; }
.cap { margin: 0; height: 15px; flex: none; display: flex; align-items: center; font-size: 13px; line-height: 14px; font-weight: 400; border: 1px solid #85827a; }
.cap svg { width: 12px; height: 12px; margin-right: 6px; }
.cap svg:nth-of-type(1) { margin-left: auto; }
.cap svg:last-child { margin-right: 2px; }
.cap.active { background: #0055e5; color: #fff; border-color: #0055e5; }
.nav { width: 191px; flex: none; display: flex; flex-direction: column; margin-right: 3px; }
.dock { flex: 1; min-height: 0; display: flex; flex-direction: column; border: 1px solid #9d9a8e; margin: 1px 1px 1px 0; }
.flat { height: 22px; flex: none; border-top: 1px solid #fff; border-bottom: 1px solid #9d9a8e; }
.mini { height: 28px; flex: none; display: flex; align-items: center; gap: 7px; padding-left: 6px; background: linear-gradient(#fbfaf7, #ece9d8); }
.treebox { flex: 1; min-height: 0; display: flex; border: 1px solid #7f9db9; margin-left: 1px; background: #fff; overflow: hidden; }
.tree { flex: 1; min-width: 0; overflow: hidden; background: repeating-linear-gradient(#999 0 1px, transparent 1px 2px) 12px 8px / 1px 100% no-repeat; }
.tree div, .tree li li { height: 16px; display: flex; align-items: center; }
.tree div { padding-left: 8px; }
.tree div .i { margin: 0 4px 0 6px; }
.pm { width: 9px; height: 9px; flex: none; border: 1px solid #8794ab; background: linear-gradient(#000, #000) center / 5px 1px no-repeat, linear-gradient(#fff, #d9d5c6); }
.pm.plus { background: linear-gradient(#000, #000) center / 5px 1px no-repeat, linear-gradient(#000, #000) center / 1px 5px no-repeat, linear-gradient(#fff, #d9d5c6); }
.tree ul { margin-left: 31px; border-left: 1px dotted #999; }
.tree li li::before { content: ""; width: 10px; border-top: 1px dotted #999; }
.tree li li > span { padding: 0 4px; line-height: 16px; }
.tree .cur { background: #ece9d8; }
.sb { width: 17px; flex: none; display: flex; flex-direction: column; background: #f6f5f0; padding: 1px; }
.sb button, .hsb button { width: 15px; height: 16px; flex: none; display: grid; place-items: center; overflow: hidden; border: 1px solid #b3c5f2; border-radius: 2px; background: linear-gradient(135deg, #dfe8fe, #b6c9f8); }
.dn .i { transform: rotate(180deg); }
.thumb { border: 1px solid #9db8ef; border-radius: 2px; background: repeating-linear-gradient(#88a4dd 0 1px, #eef4ff 1px 2px) center / 7px 7px no-repeat, linear-gradient(90deg, #cbdafd, #b9cdfb); margin: 1px 0; }
.rest { flex: 1; }
.navsb .thumb { flex: 3; }
.propsb .thumb { flex: 86; }
.propsb .rest:nth-of-type(1) { flex: 95; }
.propsb .rest:nth-of-type(3) { flex: 93; }
.mid { width: 303px; flex: none; display: flex; flex-direction: column; margin-right: 6px; padding-left: 1px; }
.list { margin: 2px 0 1px; padding-left: 1px; }
.find { display: flex; height: 25px; flex: none; }
.find input { flex: 1; min-width: 0; border: 1px solid #7f9db9; padding: 0 2px; height: 24px; }
.find input::placeholder { color: #888; }
.find button { width: 24px; display: grid; place-items: center; }
.comp { flex: 235; min-height: 0; border: 1px solid #7f9db9; background: #fff; padding-top: 2px; }
.comp div { height: 16px; display: flex; align-items: center; padding-left: 8px; }
.comp .pm + .i { margin: 0 3px 0 7px; }
.comp .leaf { padding-left: 41px; }
.leaf b { background: #316ac5; font-weight: 400; padding: 0 3px; height: 15px; line-height: 15px; margin-left: 4px; }
.prop { margin-top: 6px; }
.props { flex: 309; min-height: 0; display: flex; border: 1px solid #7f9db9; margin-top: 1px; background: #fff; overflow: hidden; }
table { border-collapse: separate; border-spacing: 0; table-layout: fixed; }
td, th { padding: 0 0 0 2px; font-weight: 400; border-right: 1px solid #c0c0c0; border-bottom: 1px solid #c0c0c0; text-align: left; overflow: hidden; }
th { background: linear-gradient(#fff, #edebe1); text-align: center; padding: 0; }
.or { background: linear-gradient(#fbdaa1, #f2c15f); color: #590052; }
.props table { flex: 1; width: 0; align-self: flex-start; }
.props tr { height: 19px; }
.props thead tr { height: 23px; }
.props .lastrow > * { vertical-align: top; line-height: 12px; }
.n { width: 22px; }
.k { width: 121px; }
.props tbody th { font: 11px/14px "Liberation Sans", sans-serif; }
.props .top { padding-left: 20px; }
.props .grp { color: #808080; padding-left: 19px; position: relative; }
.grp::before { content: ""; position: absolute; left: 2px; top: 3px; width: 12px; height: 12px; border: 1px solid #aaa; background: linear-gradient(#000, #000) center / 6px 1px no-repeat, #f5f4ef; }
.props .sub { padding-left: 30px; background: linear-gradient(#bbb, #bbb) 8px 9px / 17px 1px no-repeat, linear-gradient(#bbb, #bbb) 8px 0 / 1px 100% no-repeat; }
.props .sub.end { background-size: 17px 1px, 1px 50%; }
.bl { color: #0000f0; }
.props .now th { background: #ffd28a; color: #590052; }
.props .now td { background-color: #e0e9f6; }
.props .now .sub { background-color: #316ac5; color: #fff; }
.propsb { margin-left: 1px; width: 18px; }
.work { flex: 1; min-width: 0; display: flex; flex-direction: column; }
.combos { align-self: flex-start; padding: 0 3px 0 4px; }
.combos .g { margin-right: 3px; }
.two { display: flex; justify-content: space-between; margin-top: 2px; }
.two .tb { padding: 0 3px 0 2px; }
.stub { width: 31px; }
.axes { align-self: flex-start; margin: 2px 0 1px 397px; padding: 0 3px 0 4px; }
.stage { flex: 1; min-height: 0; display: flex; }
.vt { width: 25px; flex: none; display: flex; flex-direction: column; align-items: center; background: linear-gradient(90deg, #fcfcfa, #ece9d8); border-radius: 4px; padding: 4px 3px 0 0; }
.vg { width: 15px; height: 3px; margin-bottom: 4px; background: repeating-linear-gradient(90deg, #b9b5a2 0 3px, transparent 3px 4px); }
.vt button { width: 16px; height: 50px; display: flex; flex-direction: column; align-items: center; gap: 3px; }
.vt span { width: 12px; font-size: 12px; line-height: 12px; white-space: normal; }
.vs { width: 15px; height: 1px; margin: 0 0 4px; background: #bdb9a7; }
.vt .more { margin: auto 0 4px 10px; transform: rotate(90deg); }
.model { flex: 1; min-width: 0; width: 0; height: 100%; display: block; shape-rendering: crispEdges; }
.lbl { fill: #eee; font: 19px "Noto Sans", sans-serif; }
.snap { margin-top: 2px; padding-left: 2px; }
.far { margin: 0 0 0 8px; }
.far + .sel { margin-left: 1px; }
.num { display: flex; align-items: center; color: #aca899; margin-right: 5px; }
.snap .s { margin-right: 2px; }
.box { display: flex; align-items: center; width: 58px; height: 19px; border: 1px solid #aca899; margin: 0 2px; }
.box input { width: 42px; border: 0; background: none; text-align: right; padding: 0; }
.box i { width: 6px; height: 11px; margin-left: 5px; background: linear-gradient(#aca899, #aca899) 2px 0 / 2px 1px no-repeat, linear-gradient(#aca899, #aca899) 0 2px / 6px 1px no-repeat, linear-gradient(#aca899, #aca899) 0 8px / 6px 1px no-repeat, linear-gradient(#aca899, #aca899) 2px 10px / 2px 1px no-repeat; }
.chk { display: flex; align-items: center; gap: 8px; }
.chk input { appearance: none; width: 12px; height: 12px; border: 1px solid #aca899; }
.rebar { display: flex; margin-top: 4px; flex: none; }
.handle { width: 10px; flex: none; display: flex; flex-direction: column; align-items: center; }
.handle::after { content: ""; flex: 1; width: 2px; margin: 5px 0; background: repeating-linear-gradient(#aaa79a 0 2px, transparent 2px 4px); }
.handle button { width: 9px; height: 9px; background: #d8452a; color: #fff; font-size: 10px; line-height: 8px; border-radius: 2px; }
.pane { flex: 1; min-width: 0; }
.rb { margin: 1px 0; }
.rb .s { margin: 0 0 0 2px; }
.total { padding-left: 8px; }
.grid { border: 1px solid #7f9db9; border-right: 0; background: #fff; padding-left: 1px; overflow: hidden; }
.grid table { width: 100%; }
.grid tr { height: 34px; }
.grid thead tr, .grid .blank { height: 19px; }
.grid thead tr { height: 20px; }
.grid td { background: #ccffdb; }
.grid .blank td { background: #fff; }
.grid td:nth-child(2) { border-right-color: #000; }
.grid .cur th { background: #ffd28a; color: #590052; }
.grid .pick { background: #b5e8d8; }
.grid td p { margin: 0; line-height: 12px; }
.c33 { width: 33px; }
.c73 { width: 73px; }
.c57 { width: 57px; }
.c35 { width: 35px; }
.c201 { width: 201px; }
.c166 { width: 166px; }
.c156 { width: 156px; }
.c61 { width: 61px; }
.q { width: 12px; height: 12px; display: block; margin: auto; }
.shape { display: flex; align-items: flex-end; gap: 4px; padding: 0 0 8px 7px; line-height: 12px; }
.shape div { position: relative; width: 140px; color: #e00000; padding-top: 8px; }
.shape div span { position: absolute; left: 52px; top: 5px; }
.shape svg { width: 140px; height: 16px; display: block; }
.stirrup { display: flex; align-items: center; justify-content: center; gap: 9px; padding-right: 32px; }
.stirrup div { position: relative; width: 35px; height: 23px; border: 2px solid #000; border-radius: 2px; color: #e00000; padding: 7px 0 0; line-height: 12px; }
.stirrup svg { position: absolute; inset: 0; width: 31px; height: 20px; }
.hsb { display: flex; margin-top: 14px; height: 17px; background: #f6f5f0; }
.hsb button { width: 17px; }
.hsb button .i { transform: rotate(-90deg); }
.hsb .rt { margin-left: auto; }
.hsb .rt .i { transform: rotate(90deg); }
.hsb .thumb { width: 37%; margin: 0 1px; background: repeating-linear-gradient(90deg, #88a4dd 0 1px, #eef4ff 1px 2px) center / 8px 7px no-repeat, linear-gradient(#cbdafd, #b9cdfb); }
.status { height: 22px; flex: none; display: flex; gap: 2px; align-items: center; margin-top: 1px; border-top: 1px solid #d0cdbc; background: linear-gradient(#f3f1e8, #ece9d8); }
.status > span { height: 19px; line-height: 17px; padding-left: 1px; border: 1px solid #cdcab9; }
.w148 { width: 148px; }
.w80 { width: 79px; }
.w98 { width: 98px; }
.w48 { width: 48px; }
.grow { flex: 1; }
.taskbar { height: 3px; flex: none; background: #2a6fdf; display: flex; }
.taskbar i { width: 94px; background: #3c8f3c; }
.marks { position: absolute; inset: 0; width: 100%; height: 100%; pointer-events: none; shape-rendering: crispEdges; }
```
